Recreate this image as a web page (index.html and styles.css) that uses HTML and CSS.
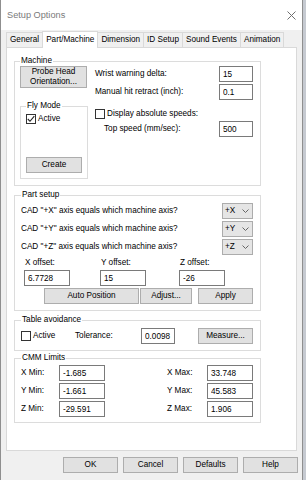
FILE: index.html
```html
<!DOCTYPE html>
<html>
<head>
<meta charset="utf-8">
<title>Setup Options</title>
<link rel="stylesheet" href="styles.css">
</head>
<body>
<div class="window">
  <div class="titlebar">
    <span class="title">Setup Options</span>
    <svg class="close" width="9" height="9" viewBox="0 0 9 9"><path d="M0.5 0.5 L8.5 8.5 M8.5 0.5 L0.5 8.5" stroke="#6f6f6f" stroke-width="1" fill="none"/></svg>
  </div>
  <div class="content">
    <div class="tabs">
      <div class="tab">General</div>
      <div class="tab active">Part/Machine</div>
      <div class="tab">Dimension</div>
      <div class="tab">ID Setup</div>
      <div class="tab">Sound Events</div>
      <div class="tab">Animation</div>
    </div>
    <div class="panel">
      <fieldset class="group machine">
        <legend>Machine</legend>
        <div class="machine-grid">
          <div class="left-col">
            <button class="btn probe">Probe Head<br>Orientation...</button>
            <fieldset class="group fly">
              <legend>Fly Mode</legend>
              <label class="check"><span class="box"><svg width="8" height="8" viewBox="0 0 8 8"><path d="M0.8 4 L3 6.3 L7.3 1.2" stroke="#222" stroke-width="1.1" fill="none"/></svg></span>Active</label>
              <button class="btn create">Create</button>
            </fieldset>
          </div>
          <div class="right-col">
            <div class="row"><span>Wrist warning delta:</span><input class="field" value="15" readonly></div>
            <div class="row gap2"><span>Manual hit retract (inch):</span><input class="field" value="0.1" readonly></div>
            <label class="check speeds"><span class="box"></span>Display absolute speeds:</label>
            <div class="row gap2 indent"><span>Top speed (mm/sec):</span><input class="field" value="500" readonly></div>
          </div>
        </div>
      </fieldset>

      <fieldset class="group part">
        <legend>Part setup</legend>
        <div class="axis-list">
          <div class="row"><span>CAD "+X" axis equals which machine axis?</span><span class="combo"><span>+X</span><svg width="7" height="4" viewBox="0 0 7 4"><path d="M0.5 0.5 L3.5 3.5 L6.5 0.5" stroke="#666" fill="none"/></svg></span></div>
          <div class="row"><span>CAD "+Y" axis equals which machine axis?</span><span class="combo"><span>+Y</span><svg width="7" height="4" viewBox="0 0 7 4"><path d="M0.5 0.5 L3.5 3.5 L6.5 0.5" stroke="#666" fill="none"/></svg></span></div>
          <div class="row"><span>CAD "+Z" axis equals which machine axis?</span><span class="combo"><span>+Z</span><svg width="7" height="4" viewBox="0 0 7 4"><path d="M0.5 0.5 L3.5 3.5 L6.5 0.5" stroke="#666" fill="none"/></svg></span></div>
        </div>
        <div class="offsets">
          <div class="offset"><span>X offset:</span><input class="field wide" value="6.7728" readonly></div>
          <div class="offset"><span>Y offset:</span><input class="field wide" value="15" readonly></div>
          <div class="offset"><span>Z offset:</span><input class="field wide" value="-26" readonly></div>
        </div>
        <div class="actions">
          <button class="btn auto">Auto Position</button>
          <button class="btn adjust">Adjust...</button>
          <button class="btn apply">Apply</button>
        </div>
      </fieldset>

      <fieldset class="group table">
        <legend>Table avoidance</legend>
        <div class="table-row">
          <label class="check"><span class="box"></span>Active</label>
          <span>Tolerance:</span>
          <input class="field" value="0.0098" readonly>
          <button class="btn measure">Measure...</button>
        </div>
      </fieldset>

      <fieldset class="group cmm">
        <legend>CMM Limits</legend>
        <div class="limits">
          <span>X Min:</span><input class="field wide" value="-1.685" readonly><span></span><span>X Max:</span><input class="field wide" value="33.748" readonly>
          <span>Y Min:</span><input class="field wide" value="-1.661" readonly><span></span><span>Y Max:</span><input class="field wide" value="45.583" readonly>
          <span>Z Min:</span><input class="field wide" value="-29.591" readonly><span></span><span>Z Max:</span><input class="field wide" value="1.906" readonly>
        </div>
      </fieldset>
    </div>
    <div class="footer">
      <button class="btn foot">OK</button>
      <button class="btn foot">Cancel</button>
      <button class="btn foot">Defaults</button>
      <button class="btn foot">Help</button>
    </div>
  </div>
</div>
</body>
</html>
```

FILE: styles.css
```css
* { box-sizing: border-box; }
html, body { margin: 0; padding: 0; }
body {
  width: 306px;
  height: 480px;
  overflow: hidden;
  background: #c6cad1;
  font-family: "Liberation Sans", Arial, sans-serif;
  font-size: 8.2px;
  line-height: 10px;
  color: #000;
}
.window {
  width: 303px;
  height: 480px;
  background: #f0f0f0;
  border-left: 1px solid #8f8f8f;
  border-right: 1px solid #8f8f8f;
  display: flex;
  flex-direction: column;
}
.titlebar {
  height: 30px;
  flex: none;
  background: #fff;
  display: flex;
  align-items: center;
  justify-content: space-between;
  padding: 0 6px 0 6px;
}
.title { font-size: 9.2px; color: #7a7a7a; }
.close { display: block; }
.content { padding: 0 5px; }
.tabs {
  display: flex;
  align-items: flex-end;
  height: 16px;
  margin-top: 1px;
}
.tab {
  height: 15px;
  padding: 0 3px;
  border: 1px solid #d9d9d9;
  border-bottom: none;
  margin-right: -1px;
  background: #f0f0f0;
  display: flex;
  align-items: center;
  white-space: nowrap;
}
.tab.active {
  height: 17px;
  margin-bottom: -1px;
  background: #fff;
  position: relative;
  z-index: 3;
}
.panel {
  position: relative;
  z-index: 1;
  height: 404px;
  border: 1px solid #d9d9d9;
  background: #fff;
  padding: 8px 0 0 7px;
}
.group {
  margin: 0;
  min-width: 0;
  width: 247px;
  border: 1px solid #dcdcdc;
}
.group > legend {
  padding: 0 1px;
  height: 10px;
  line-height: 10px;
}
.machine { padding: 0 7px 6px 5px; }
.machine-grid {
  display: grid;
  grid-template-columns: 68px 158px;
  column-gap: 7px;
}
.left-col { display: flex; flex-direction: column; }
.right-col { display: flex; flex-direction: column; }
.btn {
  font: inherit;
  color: #000;
  height: 16px;
  padding: 0;
  background: #e1e1e1;
  border: 1px solid #adadad;
  line-height: 10px;
}
.probe { width: 67px; height: 22px; }
.fly {
  width: 68px;
  margin-top: 13px;
  padding: 3px 5px 5px 5px;
}
.create { width: 56px; margin-top: 33px; display: block; }
.check {
  display: flex;
  align-items: center;
  height: 10px;
  gap: 2px;
  white-space: nowrap;
}
.box {
  width: 10px;
  height: 10px;
  flex: none;
  border: 1px solid #333;
  background: #fff;
  display: flex;
  align-items: center;
  justify-content: center;
}
.row {
  display: flex;
  align-items: center;
  justify-content: space-between;
  height: 16px;
  white-space: nowrap;
}
.gap2 { margin-top: 2px; }
.speeds { margin-top: 9px; }
.indent { padding-left: 9px; }
.field {
  font: inherit;
  color: #000;
  width: 34px;
  height: 16px;
  padding: 0 0 0 3px;
  border: 1px solid #7a7a7a;
  background: #fff;
  outline: none;
}
.field.wide { width: 46px; }
.part { margin-top: 4px; padding: 3px 7px 6px 6px; }
.axis-list { display: flex; flex-direction: column; gap: 2px; }
.combo {
  width: 31px;
  height: 16px;
  border: 1px solid #acacac;
  background: #e5e5e5;
  display: flex;
  align-items: center;
  justify-content: space-between;
  padding: 0 3px 0 2px;
}
.offsets {
  display: grid;
  grid-template-columns: 76px 79px 46px;
  margin-top: 3px;
  padding-left: 3px;
}
.offset > span { display: block; padding-left: 1px; margin-bottom: 2px; }
.actions { display: flex; margin-top: 2px; padding-left: 23px; }
.auto { width: 95px; }
.adjust { width: 52px; margin-left: 1px; }
.apply { width: 55px; margin-left: 6px; }
.table { margin-top: 4px; padding: 3px 7px 6px 6px; }
.table-row {
  display: grid;
  grid-template-columns: 54px 66px 34px 1fr;
  align-items: center;
  height: 16px;
}
.measure { width: 55px; justify-self: end; }
.cmm { margin-top: 2px; padding: 2px 7px 5px 6px; }
.limits {
  display: grid;
  grid-template-columns: 38px 46px 62px 40px 46px;
  row-gap: 2px;
  align-items: center;
}
.footer {
  display: flex;
  justify-content: flex-end;
  gap: 5px;
  margin-top: 6px;
  margin-right: -1px;
}
.foot { width: 55px; }
```
